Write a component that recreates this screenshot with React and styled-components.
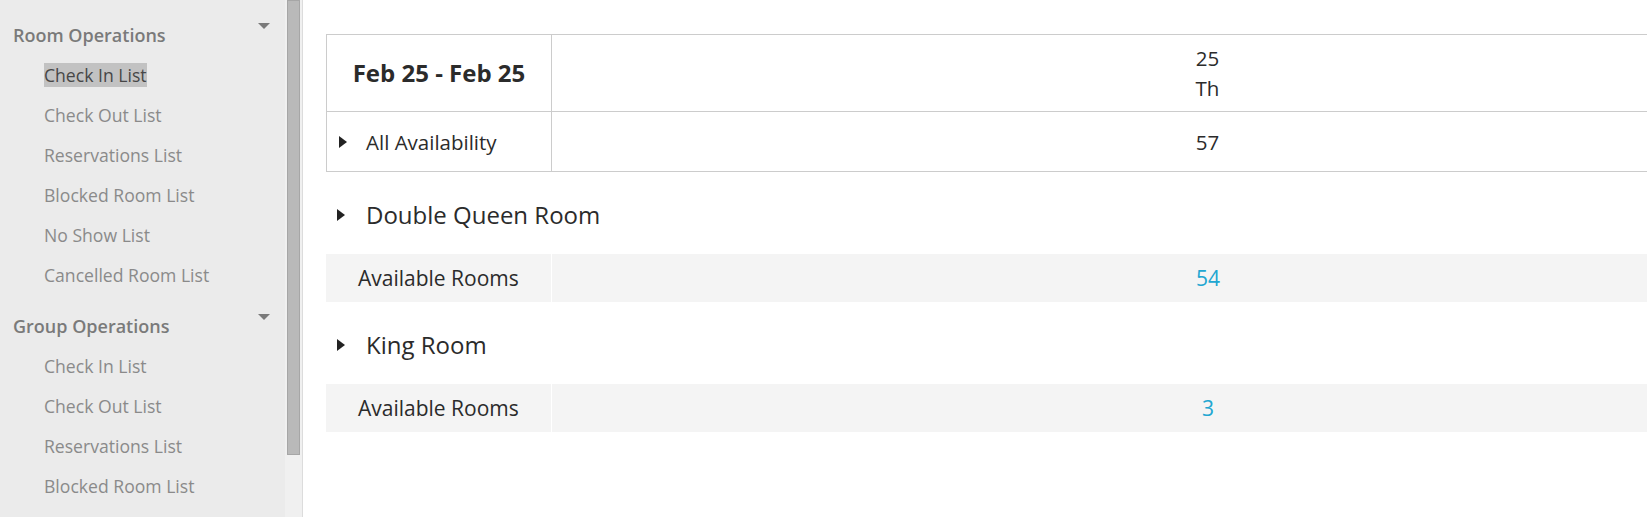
import React from 'react';
import styled, { createGlobalStyle } from 'styled-components';

const GlobalStyle = createGlobalStyle`
  html, body {
    margin: 0;
    padding: 0;
    background: #fff;
    font-family: "Open Sans", "Liberation Sans", sans-serif;
  }
`;

const Page = styled.div`
  display: flex;
  height: 517px;
  overflow: hidden;
`;

const Sidebar = styled.aside`
  flex: 0 0 303px;
  display: flex;
  height: 517px;
  box-sizing: border-box;
  background: #ebebeb;
  border-right: 1px solid #dcdcdc;
`;

const Nav = styled.nav`
  width: 285px;
  height: 517px;
  overflow: hidden;
  padding-top: 15px;
  box-sizing: border-box;
`;

const ScrollTrack = styled.div`
  width: 17px;
  box-sizing: border-box;
  padding: 0 2px;
  background: #f0f0f0;
`;

const ScrollThumb = styled.div`
  height: 455px;
  box-sizing: border-box;
  background: #b9b9b9;
  border: 1px solid #a6a6a6;
`;

const Section = styled.section`
  margin-bottom: 11px;
`;

const SectionHead = styled.div`
  display: flex;
  justify-content: space-between;
  align-items: flex-start;
  height: 40px;
  line-height: 40px;
  padding: 0 15px 0 13px;
  font-size: 18px;
  font-weight: 600;
  color: #7a7a7a;
`;

const Caret = styled.span`
  margin-top: 8px;
  width: 0;
  height: 0;
  border-left: 6px solid transparent;
  border-right: 6px solid transparent;
  border-top: 6px solid #7a7a7a;
`;

const NavItem = styled.div`
  height: 40px;
  line-height: 40px;
  padding-left: 44px;
  font-size: 17.6px;
  white-space: nowrap;
  color: ${p => (p.$active ? '#474747' : '#8a8a8a')};

  span {
    background: ${p => (p.$active ? '#c2c2c2' : 'transparent')};
  }
`;

const Main = styled.main`
  flex: 1;
  overflow: hidden;
  padding: 34px 0 0 23px;
  color: #2b2b2b;
`;

const Table = styled.table`
  border-collapse: collapse;
  table-layout: fixed;
  width: 1537px;
`;

const Cell = styled.td`
  border: 1px solid #cccccc;
  height: ${p => p.$h}px;
  padding: 0;
  box-sizing: border-box;
  text-align: ${p => (p.$left ? 'left' : 'center')};
  font-size: ${p => (p.$bold ? '24px' : '20.5px')};
  font-weight: ${p => (p.$bold ? 700 : 400)};
  line-height: 30px;
`;

const Toggle = styled.span`
  display: inline-block;
  flex: none;
  width: 0;
  height: 0;
  border-top: 6px solid transparent;
  border-bottom: 6px solid transparent;
  border-left: 8px solid #222;
`;

const RowLabel = styled.div`
  display: flex;
  align-items: center;
  gap: 19px;
  padding-left: 12px;
`;

const RoomTitle = styled.div`
  display: flex;
  align-items: center;
  gap: 21px;
  height: 82px;
  padding: 3px 0 0 11px;
  box-sizing: border-box;
  font-size: 24px;
`;

const DataRow = styled.div`
  display: grid;
  grid-template-columns: 225px 1312px;
  column-gap: 1px;
  height: 48px;
  font-size: 21px;
`;

const DataCell = styled.div`
  display: flex;
  align-items: center;
  justify-content: ${p => (p.$center ? 'center' : 'flex-start')};
  padding-left: ${p => (p.$center ? 0 : 32)}px;
  background: #f4f4f4;
  color: ${p => (p.$link ? '#21a6d1' : '#2b2b2b')};
`;

const menu = [
  {
    title: 'Room Operations',
    items: ['Check In List', 'Check Out List', 'Reservations List', 'Blocked Room List', 'No Show List', 'Cancelled Room List'],
    active: 0
  },
  {
    title: 'Group Operations',
    items: ['Check In List', 'Check Out List', 'Reservations List', 'Blocked Room List', 'No Show List', 'Cancelled Room List'],
    active: -1
  }
];

const rooms = [
  { name: 'Double Queen Room', available: 54 },
  { name: 'King Room', available: 3 }
];

export default function App() {
  return (
    <Page>
      <GlobalStyle />
      <Sidebar>
        <Nav>
          {menu.map(sec => (
            <Section key={sec.title}>
              <SectionHead>
                {sec.title}
                <Caret />
              </SectionHead>
              {sec.items.map((item, i) => (
                <NavItem key={item} $active={i === sec.active}>
                  <span>{item}</span>
                </NavItem>
              ))}
            </Section>
          ))}
        </Nav>
        <ScrollTrack>
          <ScrollThumb />
        </ScrollTrack>
      </Sidebar>
      <Main>
        <Table>
          <colgroup>
            <col style={{ width: 225 }} />
            <col style={{ width: 1312 }} />
          </colgroup>
          <tbody>
            <tr>
              <Cell $h={77} $bold>Feb 25 - Feb 25</Cell>
              <Cell $h={77}>25<br />Th</Cell>
            </tr>
            <tr>
              <Cell $h={60} $left>
                <RowLabel>
                  <Toggle />
                  All Availability
                </RowLabel>
              </Cell>
              <Cell $h={60}>57</Cell>
            </tr>
          </tbody>
        </Table>
        {rooms.map(room => (
          <div key={room.name}>
            <RoomTitle>
              <Toggle />
              {room.name}
            </RoomTitle>
            <DataRow>
              <DataCell>Available Rooms</DataCell>
              <DataCell $center $link>{room.available}</DataCell>
            </DataRow>
          </div>
        ))}
      </Main>
    </Page>
  );
}
